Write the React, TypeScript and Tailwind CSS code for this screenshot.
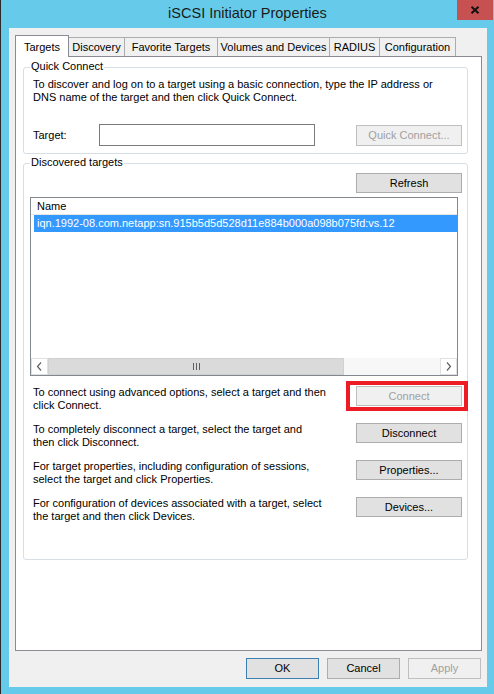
import React from "react";

function WinButton({
  children,
  disabled,
  isDefault,
  className = "",
}: {
  children: React.ReactNode;
  disabled?: boolean;
  isDefault?: boolean;
  className?: string;
}) {
  const base =
    "flex items-center justify-center border leading-[13px] whitespace-nowrap ";
  const look = disabled
    ? "bg-[#f0f0f0] border-[#bfbfbf] text-[#a0a0a0]"
    : isDefault
    ? "bg-[#e1e1e1] border-[#3c7fb1] text-black"
    : "bg-[#e1e1e1] border-[#adadad] text-black";
  return <div className={base + look + " " + className}>{children}</div>;
}

function Tab({
  label,
  selected,
  w,
}: {
  label: string;
  selected?: boolean;
  w: string;
}) {
  if (selected) {
    return (
      <div
        className={
          "relative z-10 h-[22px] mb-[-1px] bg-white border-t border-l border-r border-[#898c95] flex items-start justify-center pt-[3px] " +
          w
        }
      >
        {label}
      </div>
    );
  }
  return (
    <div
      className={
        "h-[19px] -ml-px bg-[#f0f0f0] border-t border-l border-r border-[#acacac] flex items-center justify-center pt-[1px] " +
        w
      }
    >
      {label}
    </div>
  );
}

function GroupBox({
  label,
  className = "",
  children,
}: {
  label: string;
  className?: string;
  children: React.ReactNode;
}) {
  return (
    <div
      className={
        "relative border border-[#d5dfe5] rounded-[3px] w-[445px] " + className
      }
    >
      <div className="absolute -top-[8px] left-[6px] px-[1px] bg-white leading-[13px]">
        {label}
      </div>
      {children}
    </div>
  );
}

function ActionRow({
  lines,
  button,
  disabled,
  highlight,
}: {
  lines: [string, string];
  button: string;
  disabled?: boolean;
  highlight?: boolean;
}) {
  return (
    <div className="flex justify-between items-start h-[26px] pl-[3px]">
      <div className="leading-[13px] whitespace-nowrap">
        {lines[0]}
        <br />
        {lines[1]}
      </div>
      <div className="relative">
        <WinButton disabled={disabled} className="w-[106px] h-[20px]">
          {button}
        </WinButton>
        {highlight && (
          <div className="absolute -left-[10px] -top-[5px] -right-[6px] -bottom-[5px] border-4 border-[#ed1c24]" />
        )}
      </div>
    </div>
  );
}

export default function App() {
  return (
    <div className="w-[494px] h-[694px] bg-[#66cbea] border-l border-[#2b2b2b] flex flex-col font-['Liberation_Sans',Arial,sans-serif] text-[11px] text-black overflow-hidden">
      {/* Title bar */}
      <div className="relative h-[28px] flex items-center justify-center pb-[2px]">
        <div className="text-[14.5px] text-[#1b1b1b] leading-[18px]">
          iSCSI Initiator Properties
        </div>
        <div className="absolute top-0 right-[1px] w-[36px] h-[20px] bg-[#c75050] flex items-center justify-center">
          <svg width="10" height="8" viewBox="0 0 10 8">
            <path
              d="M1.5 0.8 L8.5 7.2 M8.5 0.8 L1.5 7.2"
              stroke="#111"
              strokeWidth="2"
              fill="none"
            />
          </svg>
        </div>
      </div>

      {/* Client area */}
      <div className="ml-[8px] mr-[7px] h-[659px] bg-[#f0f0f0] flex flex-col pl-[6px] pr-[5px] pt-[7px]">
        {/* Tabs */}
        <div className="flex items-end h-[21px]">
          <Tab label="Targets" selected w="w-[54px]" />
          <Tab label="Discovery" w="w-[57px]" />
          <Tab label="Favorite Targets" w="w-[94px]" />
          <Tab label="Volumes and Devices" w="w-[113px]" />
          <Tab label="RADIUS" w="w-[51px]" />
          <Tab label="Configuration" w="w-[77px]" />
        </div>

        {/* Tab panel */}
        <div className="h-[595px] border border-[#898c95] bg-white pt-[10px] pl-[7px] pr-[13px]">
          <GroupBox label="Quick Connect" className="h-[87px]">
            <div className="pt-[10px] pl-[9px] pr-[5px]">
              <div className="leading-[13px] whitespace-nowrap">
                To discover and log on to a target using a basic connection,
                type the IP address or
                <br />
                DNS name of the target and then click Quick Connect.
              </div>
              <div className="mt-[20px] flex items-center h-[22px]">
                <div className="w-[66px]">Target:</div>
                <div className="w-[216px] h-[22px] border border-[#7a7a7a] bg-white" />
                <div className="ml-auto">
                  <WinButton disabled className="w-[106px] h-[21px]">
                    Quick Connect...
                  </WinButton>
                </div>
              </div>
            </div>
          </GroupBox>

          <GroupBox label="Discovered targets" className="h-[397px] mt-[9px]">
            <div className="pt-[9px] pl-[6px] pr-[5px]">
              <div className="flex justify-end">
                <WinButton className="w-[106px] h-[20px]">Refresh</WinButton>
              </div>

              {/* List view */}
              <div className="mt-[4px] w-[428px] h-[179px] border border-[#828790] bg-white flex flex-col">
                <div className="h-[17px] border-b border-[#e5e5e5] pl-[6px] leading-[16px]">
                  Name
                </div>
                <div className="ml-[3px] h-[17px] bg-[#3399ff] text-white pl-[3px] leading-[17px] whitespace-nowrap">
                  iqn.1992-08.com.netapp:sn.915b5d5d528d11e884b000a098b075fd:vs.12
                </div>
                <div className="flex-1" />
                {/* Horizontal scrollbar */}
                <div className="h-[17px] flex bg-[#f7f7f7]">
                  <div className="w-[17px] h-[17px] bg-white border border-[#e0e0e0] flex items-center justify-center">
                    <svg width="7" height="9" viewBox="0 0 7 9">
                      <path
                        d="M5 0.5 L1.5 4.5 L5 8.5"
                        stroke="#606060"
                        strokeWidth="1.2"
                        fill="none"
                      />
                    </svg>
                  </div>
                  <div className="w-[296px] h-[17px] bg-[#dadada] border border-[#d0d0d0] flex items-center justify-center gap-[2px]">
                    <div className="w-px h-[7px] bg-[#606060]" />
                    <div className="w-px h-[7px] bg-[#606060]" />
                    <div className="w-px h-[7px] bg-[#606060]" />
                  </div>
                  <div className="flex-1 bg-[#f7f7f7]" />
                  <div className="w-[17px] h-[17px] bg-white border border-[#e0e0e0] flex items-center justify-center">
                    <svg width="7" height="9" viewBox="0 0 7 9">
                      <path
                        d="M2 0.5 L5.5 4.5 L2 8.5"
                        stroke="#606060"
                        strokeWidth="1.2"
                        fill="none"
                      />
                    </svg>
                  </div>
                </div>
              </div>

              <div className="mt-[10px] flex flex-col gap-[11px]">
                <ActionRow
                  lines={[
                    "To connect using advanced options, select a target and then",
                    "click Connect.",
                  ]}
                  button="Connect"
                  disabled
                  highlight
                />
                <ActionRow
                  lines={[
                    "To completely disconnect a target, select the target and",
                    "then click Disconnect.",
                  ]}
                  button="Disconnect"
                />
                <ActionRow
                  lines={[
                    "For target properties, including configuration of sessions,",
                    "select the target and click Properties.",
                  ]}
                  button="Properties..."
                />
                <ActionRow
                  lines={[
                    "For configuration of devices associated with a target, select",
                    "the target and then click Devices.",
                  ]}
                  button="Devices..."
                />
              </div>
            </div>
          </GroupBox>
        </div>

        {/* Dialog buttons */}
        <div className="mt-[7px] flex justify-end gap-[8px] pr-[1px]">
          <WinButton isDefault className="w-[73px] h-[21px]">
            OK
          </WinButton>
          <WinButton className="w-[73px] h-[21px]">Cancel</WinButton>
          <WinButton disabled className="w-[73px] h-[21px]">
            Apply
          </WinButton>
        </div>
      </div>
    </div>
  );
}
